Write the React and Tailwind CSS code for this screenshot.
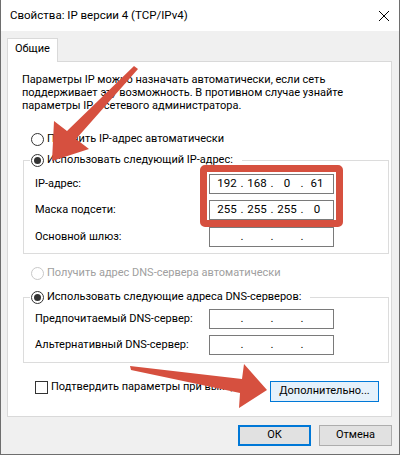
import React, { Fragment } from "react";

function Radio({ checked, disabled }) {
  return (
    <span
      className={
        disabled
          ? "w-[13px] h-[13px] rounded-full border border-[#c8c8c8] bg-white flex items-center justify-center shrink-0"
          : "w-[13px] h-[13px] rounded-full border border-[#333333] bg-white flex items-center justify-center shrink-0"
      }
    >
      {checked && <span className="w-[7px] h-[7px] rounded-full bg-[#333333]" />}
    </span>
  );
}

function IpBox({ values }) {
  return (
    <div className="w-[125px] h-[20px] shrink-0 border border-[#7a7a7a] bg-white flex items-center pl-[4px] text-[11.5px] leading-none">
      {[0, 1, 2, 3].map((i) => (
        <Fragment key={i}>
          {i > 0 && <span className="w-[4px] text-center">.</span>}
          <span className="w-[26px] text-center">{values ? values[i] : ""}</span>
        </Fragment>
      ))}
    </div>
  );
}

function Row({ label, values, extra }) {
  return (
    <div className={"flex items-center h-[20px] " + (extra || "")}>
      <span className="w-[174px] shrink-0 whitespace-nowrap">{label}</span>
      <IpBox values={values} />
    </div>
  );
}

export default function App() {
  return (
    <div className="w-[400px] h-[455px] relative overflow-hidden bg-[#f0f0f0] border-x border-b border-[#6e6e6e] flex flex-col text-[11px] text-black font-['Roboto',sans-serif]">
      {/* Title bar */}
      <div className="h-[31px] shrink-0 bg-white flex items-center pl-[9px] pr-[10px]">
        <span className="text-[11.5px]">Свойства: IP версии 4 (TCP/IPv4)</span>
        <svg className="ml-auto" width="10" height="10" viewBox="0 0 10 10">
          <path d="M0 0 L10 10 M10 0 L0 10" stroke="#000" strokeWidth="1" />
        </svg>
      </div>

      {/* Body */}
      <div className="px-[6px] pt-[7px] flex flex-col">
        <div className="flex">
          <div className="relative z-10 -mb-px w-[51px] h-[24px] bg-white border-t border-x border-[#d9d9d9] pl-[7px] pt-[2px] leading-[16px]">
            Общие
          </div>
        </div>
        <div className="w-[385px] h-[356px] border border-[#d9d9d9] bg-white flex flex-col">
          <p className="pl-[14px] pt-[11px] leading-[13px] whitespace-nowrap">
            Параметры IP можно назначать автоматически, если сеть
            <br />
            поддерживает эту возможность. В противном случае узнайте
            <br />
            параметры IP у сетевого администратора.
          </p>

          <div className="mt-[17px] ml-[23px] h-[21px] flex items-center gap-[3px]">
            <Radio />
            <span>Получить IP-адрес автоматически</span>
          </div>

          {/* Group 1 */}
          <div className="mt-[10px] ml-[15px] w-[366px] border border-[#dcdcdc] flex flex-col pl-[11px] pb-[6px]">
            <div className="-mt-[11px] -ml-[5px] self-start h-[21px] bg-white flex items-center gap-[3px] pl-[1px] pr-[9px]">
              <Radio checked />
              <span className="whitespace-nowrap">Использовать следующий IP-адрес:</span>
            </div>
            <div className="mt-[3px] flex flex-col">
              <Row label="IP-адрес:" values={["192", "168", "0", "61"]} />
              <Row label="Маска подсети:" values={["255", "255", "255", "0"]} extra="mt-[6px]" />
              <Row label="Основной шлюз:" extra="mt-[7px]" />
            </div>
          </div>

          <div className="mt-[9px] ml-[23px] h-[21px] flex items-center gap-[3px] text-[#a0a0a0]">
            <Radio disabled />
            <span className="whitespace-nowrap">Получить адрес DNS-сервера автоматически</span>
          </div>

          {/* Group 2 */}
          <div className="mt-[13px] ml-[15px] w-[366px] border border-[#dcdcdc] flex flex-col pl-[11px] pb-[7px]">
            <div className="-mt-[11px] -ml-[5px] self-start h-[21px] bg-white flex items-center gap-[3px] pl-[1px] pr-[9px]">
              <Radio checked />
              <span className="whitespace-nowrap">Использовать следующие адреса DNS-серверов:</span>
            </div>
            <div className="mt-[1px] flex flex-col">
              <Row label="Предпочитаемый DNS-сервер:" />
              <Row label="Альтернативный DNS-сервер:" extra="mt-[6px]" />
            </div>
          </div>

          <div className="mt-[18px] ml-[27px] mr-[12px] flex items-start justify-between">
            <div className="h-[13px] flex items-center gap-[3px]">
              <span className="w-[13px] h-[13px] border border-[#333333] bg-white shrink-0" />
              <span className="whitespace-nowrap">Подтвердить параметры при выходе</span>
            </div>
            <div className="w-[109px] h-[21px] shrink-0 border border-[#0078d7] bg-[#e5f1fb] flex items-center justify-center whitespace-nowrap">
              Дополнительно...
            </div>
          </div>
        </div>

        <div className="mt-[8px] mr-[1px] flex justify-end gap-[8px]">
          <div className="w-[73px] h-[21px] border-2 border-[#0078d7] bg-[#e1e1e1] flex items-center justify-center">
            ОК
          </div>
          <div className="w-[73px] h-[21px] border border-[#adadad] bg-[#e1e1e1] flex items-center justify-center">
            Отмена
          </div>
        </div>
      </div>

      {/* Annotation overlays */}
      <div className="absolute left-[199px] top-[165px] w-[143px] h-[62px] border-[7px] border-[#d6503f] rounded-[5px] pointer-events-none" />
      <svg className="absolute left-0 top-0 pointer-events-none" width="400" height="455" viewBox="0 0 400 455">
        <polygon points="133,66 137,69 75,139 88,149 51,161 53,121 66,131" fill="#d6503f" />
        <polygon points="129,366 241,379 243,364 266,390 238,408 239,393 130,370" fill="#d6503f" />
      </svg>
    </div>
  );
}
